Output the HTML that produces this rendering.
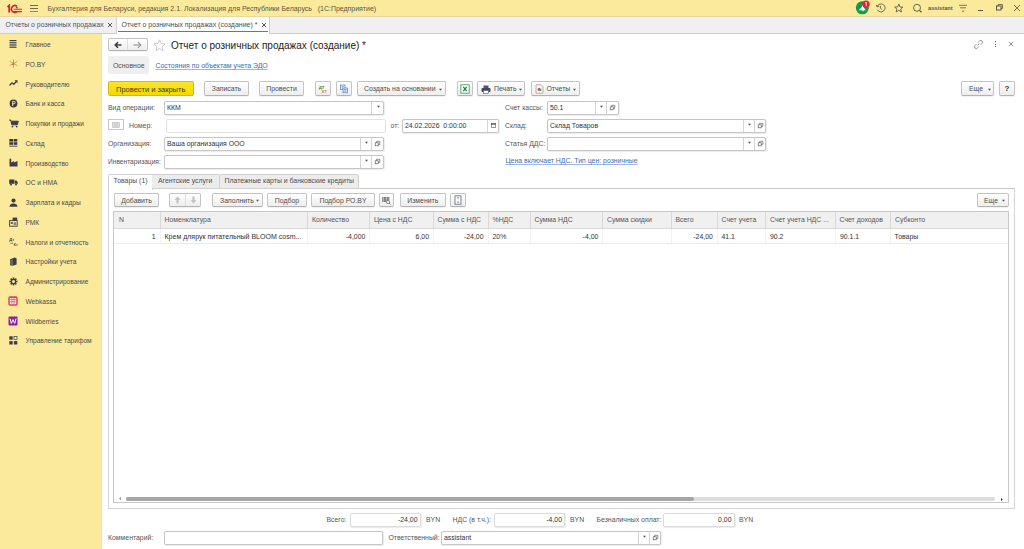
<!DOCTYPE html>
<html><head><meta charset="utf-8">
<style>
*{box-sizing:border-box;margin:0;padding:0}
html,body{width:1024px;height:549px;overflow:hidden;background:#fff;font-family:"Liberation Sans",sans-serif;color:#4d4d4d;font-size:6.9px}
.a{position:absolute;white-space:nowrap}
#top{position:absolute;left:0;top:0;width:1024px;height:17px;background:#fbea9c;border-bottom:1px solid #e6d6a0}
#tabs{position:absolute;left:0;top:17px;width:1024px;height:17px;background:#f0f0f0;border-bottom:1px solid #cdcdcd}
#side{position:absolute;left:0;top:34px;width:102px;height:515px;background:#fbea9c;border-right:1px solid #efe4b8}
.si{position:absolute;left:25.5px;font-size:6.6px;color:#4a4a4a;line-height:9.5px}
.ic{position:absolute}
.btn{position:absolute;height:14px;border:1px solid #c4c4c4;border-bottom-color:#b2b2b2;border-radius:2px;background:linear-gradient(#ffffff,#ededed);text-align:center;line-height:13.5px;color:#4d4d4d;white-space:nowrap;box-shadow:0 1px 1px rgba(0,0,0,.06)}
.fld{position:absolute;height:13px;border:1px solid #c6c6c6;border-radius:2px;background:#fff;line-height:11.5px;padding-left:2px;color:#333;white-space:nowrap;box-shadow:0.5px 0.5px 1px rgba(0,0,0,.08)}
.lbl{position:absolute;line-height:8px;white-space:nowrap;color:#555}
.sep{position:absolute;top:0;bottom:0;width:1px;background:#d6d6d6}
.dd{position:absolute;top:4px;width:0;height:0;border-left:2px solid transparent;border-right:2px solid transparent;border-top:2px solid #555}
.fdd{position:absolute;width:0;height:0;border-left:1.6px solid transparent;border-right:1.6px solid transparent;border-top:2px solid #555}
.th{position:absolute;top:0;height:17px;line-height:17px;padding-left:5px;color:#666;border-right:1px solid #dcdcdc;white-space:nowrap;overflow:hidden}
.td{position:absolute;line-height:15px;white-space:nowrap;color:#333}
</style></head><body>

<!-- TOP BAR -->
<div id="top"></div>
<div id="tabs"></div>
<div id="side"></div>

<!-- top bar content -->
<svg class="ic" style="left:6px;top:3.5px" width="18" height="10" viewBox="0 0 18 10">
 <path d="M1.5 3.2 L3.2 1.5 L3.2 8.6" stroke="#e41d2a" stroke-width="1.8" fill="none"/>
 <path d="M11 2.3 A3.4 3.4 0 1 0 11 7.6" stroke="#e41d2a" stroke-width="1.6" fill="none"/>
 <path d="M8.2 5.3 L16 5.3 M7.5 7.6 L16 7.6" stroke="#e41d2a" stroke-width="1.1" fill="none"/>
 <circle cx="10.8" cy="3.6" r="0.9" fill="#e41d2a"/>
</svg>
<div class="ic" style="left:30px;top:5px;width:7.5px;height:1px;background:#6e6a55"></div>
<div class="ic" style="left:30px;top:8px;width:7.5px;height:1px;background:#6e6a55"></div>
<div class="ic" style="left:30px;top:10.5px;width:7.5px;height:1px;background:#8d8a70"></div>
<div class="a" style="left:47.5px;top:5px;font-size:6.97px;line-height:8px;color:#5a5545">Бухгалтерия для Беларуси, редакция 2.1. Локализация для Республики Беларусь&nbsp;&nbsp;&nbsp;(1С:Предприятие)</div>

<svg class="ic" style="left:855px;top:0px" width="16" height="16" viewBox="0 0 16 16">
 <circle cx="7.3" cy="7.8" r="6.5" fill="#119a48"/>
 <path d="M3.6 10.2 L10.8 10.2 L8.6 7.2 L7.6 4.6 L6.6 7.2 Z" fill="#fff"/>
 <path d="M6.5 10.2 L8 11.8 L9 10.2 Z" fill="#e8e0f0"/>
 <circle cx="11" cy="4.1" r="3.7" fill="#e8212e"/>
 <path d="M10 3 L11.3 2.2 L11.3 6.2" stroke="#fde" stroke-width="1" fill="none"/>
</svg>
<svg class="ic" style="left:875px;top:2px" width="12" height="12" viewBox="0 0 12 12">
 <path d="M2.3 4.5 A4 4 0 1 1 2.4 7.6" stroke="#5b5646" stroke-width="0.85" fill="none"/>
 <path d="M1.3 3 L2.2 4.9 L4.2 4.3" stroke="#5b5646" stroke-width="0.85" fill="none"/>
 <path d="M5.4 3.8 L5.4 6.2 L7.2 7.6" stroke="#5b5646" stroke-width="0.85" fill="none"/>
</svg>
<svg class="ic" style="left:893px;top:2px" width="12" height="12" viewBox="0 0 12 12">
 <path d="M5.8 2 L7 5 L10 5.1 L7.7 7 L8.5 10 L5.8 8.3 L3.1 10 L3.9 7 L1.6 5.1 L4.6 5 Z" stroke="#5b5646" stroke-width="0.85" fill="none" stroke-linejoin="round"/>
</svg>
<svg class="ic" style="left:911px;top:2px" width="12" height="12" viewBox="0 0 12 12">
 <circle cx="6" cy="5.8" r="3.5" stroke="#5b5646" stroke-width="0.9" fill="none"/>
 <path d="M8.5 8.4 L10.5 10.3" stroke="#5b5646" stroke-width="1.3"/>
</svg>
<div class="a" style="left:928px;top:3.6px;font-size:5.7px;font-weight:bold;line-height:8px;color:#5b5646">assistant</div>
<svg class="ic" style="left:957px;top:2px" width="12" height="12" viewBox="0 0 12 12">
 <path d="M2 3.3 L10 3.3 M3 5.8 L9 5.8" stroke="#5b5646" stroke-width="0.8"/>
 <path d="M4.8 8.8 L7.2 8.8 L6 10.2 Z" fill="#5b5646"/>
</svg>
<div class="ic" style="left:978px;top:10px;width:5px;height:1px;background:#5b5646"></div>
<svg class="ic" style="left:995px;top:3px" width="9" height="9" viewBox="0 0 9 9">
 <rect x="1.5" y="3" width="4.5" height="4" stroke="#5b5646" stroke-width="1" fill="none"/>
 <path d="M3 3 L3 1.6 L7.4 1.6 L7.4 5.5 L6 5.5" stroke="#5b5646" stroke-width="0.9" fill="none"/>
</svg>
<svg class="ic" style="left:1013px;top:4px" width="8" height="8" viewBox="0 0 8 8">
 <path d="M1 1 L7 7 M7 1 L1 7" stroke="#5b5646" stroke-width="0.8"/>
</svg>


<!-- sidebar -->
<div class="si" style="top:40.0px">Главное</div>
<svg class="ic" style="left:9px;top:39.5px" width="8" height="8" viewBox="0 0 8 8"><rect x="0.5" y="0" width="7" height="1.2" fill="#3d3d4a"/><rect x="0.5" y="2.2" width="7" height="1.2" fill="#3d3d4a"/><rect x="0.5" y="4.4" width="7" height="1.2" fill="#3d3d4a"/><rect x="0.5" y="6.6" width="7" height="1.2" fill="#3d3d4a"/></svg>
<div class="si" style="top:59.8px">РО.BY</div>
<svg class="ic" style="left:9px;top:59.2px" width="9" height="9" viewBox="0 0 9 9"><path d="M4.5 0.5 L4.5 8.5 M0.8 2.5 L8.2 6.5 M0.8 6.5 L8.2 2.5" stroke="#b08a60" stroke-width="0.8"/><circle cx="4" cy="5.2" r="0.8" fill="#e33"/></svg>
<div class="si" style="top:79.5px">Руководителю</div>
<svg class="ic" style="left:9px;top:79.0px" width="9" height="8" viewBox="0 0 9 8"><path d="M0.5 6.5 L3 3.8 L4.8 5.3 L7.5 2.3" stroke="#3d3d4a" stroke-width="1.3" fill="none"/><path d="M5.5 1.2 L8.5 1.2 L8.5 4.2 Z" fill="#3d3d4a"/></svg>
<div class="si" style="top:99.2px">Банк и касса</div>
<svg class="ic" style="left:9px;top:98.8px" width="9" height="9" viewBox="0 0 9 9"><circle cx="4.5" cy="4.5" r="3.9" fill="#3d3d4a"/><path d="M3.6 7 L3.6 2.4 L5 2.4 A1.2 1.2 0 0 1 5 4.8 L3 4.8" stroke="#fbea9c" stroke-width="0.9" fill="none"/></svg>
<div class="si" style="top:119.0px">Покупки и продажи</div>
<svg class="ic" style="left:9px;top:118.5px" width="10" height="9" viewBox="0 0 10 9"><path d="M0.3 1 L1.8 1 L2.8 5.8 L8.3 5.8 L9.3 2.2 L2.2 2.2" stroke="#3d3d4a" stroke-width="1" fill="#3d3d4a"/><circle cx="3.4" cy="7.6" r="0.9" fill="#3d3d4a"/><circle cx="7.6" cy="7.6" r="0.9" fill="#3d3d4a"/></svg>
<div class="si" style="top:138.8px">Склад</div>
<svg class="ic" style="left:9px;top:138.7px" width="9" height="9" viewBox="0 0 9 9"><rect x="0.3" y="0" width="3.7" height="2.6" fill="#3d3d4a"/><rect x="4.6" y="0" width="3.7" height="2.6" fill="#3d3d4a"/><rect x="0.3" y="3.2" width="3.7" height="2.6" fill="#3d3d4a"/><rect x="4.6" y="3.2" width="3.7" height="2.6" fill="#3d3d4a"/><rect x="0.3" y="6.6" width="8" height="1.2" fill="#6d6a60"/></svg>
<div class="si" style="top:158.5px">Производство</div>
<svg class="ic" style="left:9px;top:158.0px" width="9" height="9" viewBox="0 0 9 9"><path d="M0.5 8.5 L0.5 0.8 L2.2 0.8 L2.2 4.5 L4.8 3 L4.8 4.5 L8.5 3 L8.5 8.5 Z" fill="#3d3d4a"/></svg>
<div class="si" style="top:178.2px">ОС и НМА</div>
<svg class="ic" style="left:9px;top:178.5px" width="9" height="7" viewBox="0 0 9 7"><rect x="0.2" y="0.5" width="5.2" height="4.3" fill="#3d3d4a"/><path d="M5.8 1.6 L7.4 1.6 L8.8 3.3 L8.8 4.8 L5.8 4.8 Z" fill="#3d3d4a"/><circle cx="2" cy="5.6" r="1" fill="#3d3d4a"/><circle cx="7" cy="5.6" r="1" fill="#3d3d4a"/></svg>
<div class="si" style="top:198.0px">Зарплата и кадры</div>
<svg class="ic" style="left:9px;top:197.5px" width="9" height="9" viewBox="0 0 9 9"><circle cx="4.5" cy="2.6" r="2.1" fill="#3d3d4a"/><path d="M0.5 8.7 Q0.8 5.4 4.5 5.4 Q8.2 5.4 8.5 8.7 Z" fill="#3d3d4a"/></svg>
<div class="si" style="top:217.8px">РМК</div>
<svg class="ic" style="left:9px;top:217.2px" width="9" height="10" viewBox="0 0 9 10"><rect x="0.6" y="3.6" width="7.6" height="5.6" stroke="#3d3d4a" stroke-width="0.9" fill="none"/><rect x="3.6" y="0.6" width="4.6" height="3" fill="#3d3d4a"/><rect x="1.8" y="5.2" width="2" height="1.6" fill="#3d3d4a"/><rect x="4.6" y="5.2" width="2.6" height="3" fill="#8a8470"/></svg>
<div class="si" style="top:237.5px">Налоги и отчетность</div>
<svg class="ic" style="left:8.5px;top:236.5px" width="10" height="10" viewBox="0 0 10 10"><text x="0.3" y="4.2" font-size="4" font-weight="bold" font-family="Liberation Sans" fill="#3d3d4a">Дт</text><text x="4.8" y="9" font-size="3.6" font-weight="bold" font-family="Liberation Sans" fill="#3d3d4a">Кт</text><path d="M1.5 6.3 L3.8 6.3" stroke="#3d3d4a" stroke-width="0.7"/></svg>
<div class="si" style="top:257.2px">Настройки учета</div>
<svg class="ic" style="left:9px;top:256.8px" width="9" height="9" viewBox="0 0 9 9"><path d="M1.2 2.2 L5.8 0.6 L7.6 1.4 L7.6 7.6 L3 9 L1.2 8.2 Z" fill="#3d3d4a"/><path d="M3 2.6 L3 9" stroke="#fbea9c" stroke-width="0.5"/></svg>
<div class="si" style="top:277.0px">Администрирование</div>
<svg class="ic" style="left:9px;top:276.5px" width="9" height="9" viewBox="0 0 9 9"><path d="M8.52 3.69 L8.52 5.31 L7.08 5.30 L6.89 5.76 L7.92 6.77 L6.77 7.92 L5.76 6.89 L5.30 7.08 L5.31 8.52 L3.69 8.52 L3.70 7.08 L3.24 6.89 L2.23 7.92 L1.08 6.77 L2.11 5.76 L1.92 5.30 L0.48 5.31 L0.48 3.69 L1.92 3.70 L2.11 3.24 L1.08 2.23 L2.23 1.08 L3.24 2.11 L3.70 1.92 L3.69 0.48 L5.31 0.48 L5.30 1.92 L5.76 2.11 L6.77 1.08 L7.92 2.23 L6.89 3.24 L7.08 3.70 Z" fill="#3d3d4a"/><circle cx="4.5" cy="4.5" r="1.5" fill="#fbea9c"/></svg>
<div class="si" style="top:296.8px">Webkassa</div>
<svg class="ic" style="left:8px;top:295.7px" width="10" height="10" viewBox="0 0 10 10"><rect x="0.3" y="0.3" width="9.4" height="9.4" rx="1.8" fill="#e5424a"/><rect x="1.8" y="2" width="6.4" height="6.2" fill="#fff"/><path d="M1.8 3.6 L8.2 3.6 M3.9 2 L3.9 8.2 M6 2 L6 8.2 M1.8 5.8 L8.2 5.8" stroke="#e5424a" stroke-width="0.7"/></svg>
<div class="si" style="top:316.5px">Wildberries</div>
<svg class="ic" style="left:8px;top:316.0px" width="10" height="10" viewBox="0 0 10 10"><rect x="0.5" y="0.5" width="9" height="9" rx="1" fill="#8a1fa0"/><path d="M2 2.6 L3.3 7.4 L5 3.6 L6.7 7.4 L8 2.6" stroke="#fff" stroke-width="1" fill="none"/></svg>
<div class="si" style="top:336.2px">Управление тарифом</div>
<svg class="ic" style="left:9px;top:335.8px" width="9" height="9" viewBox="0 0 9 9"><rect x="0.3" y="0.3" width="3.4" height="3.4" fill="#3d3d4a"/><rect x="5" y="0.5" width="3" height="3" stroke="#3d3d4a" stroke-width="0.7" fill="none"/><rect x="0.3" y="5.1" width="3.4" height="3.4" fill="#3d3d4a"/><rect x="4.9" y="5.1" width="3.4" height="3.4" fill="#3d3d4a"/></svg>


<!-- FORM HEADER -->
<div class="btn" style="left:108px;top:38px;width:40px;height:13px"></div>
<div class="ic" style="left:126.5px;top:39px;width:1px;height:11px;background:#dcdcdc"></div>
<svg class="ic" style="left:114px;top:40.5px" width="8" height="8" viewBox="0 0 8 8"><path d="M1.5 4 L7.5 4" stroke="#333" stroke-width="1.4"/><path d="M4 1.2 L1.2 4 L4 6.8" stroke="#333" stroke-width="1.5" fill="none"/></svg>
<svg class="ic" style="left:132.5px;top:40.5px" width="9" height="8" viewBox="0 0 9 8"><path d="M0.5 4 L7.5 4" stroke="#999" stroke-width="1.2"/><path d="M5 1.2 L7.8 4 L5 6.8" stroke="#999" stroke-width="1.2" fill="none"/></svg>
<svg class="ic" style="left:153px;top:38.5px" width="13" height="13" viewBox="0 0 13 13"><path d="M6.5 0.8 L8.2 4.6 L12.2 4.9 L9.1 7.6 L10.1 11.8 L6.5 9.6 L2.9 11.8 L3.9 7.6 L0.8 4.9 L4.8 4.6 Z" stroke="#c4c4c4" stroke-width="0.9" fill="none" stroke-linejoin="round"/></svg>
<div class="a" style="left:171px;top:39.5px;font-size:10px;line-height:12px;color:#222">Отчет о розничных продажах (создание) *</div>
<svg class="ic" style="left:973px;top:39px" width="11" height="11" viewBox="0 0 11 11"><path d="M4.6 6.4 L6.4 4.6" stroke="#888" stroke-width="0.9"/><path d="M5.2 3.4 L6.6 2 A1.6 1.6 0 0 1 9 4.4 L7.6 5.8" stroke="#888" stroke-width="0.9" fill="none"/><path d="M5.8 7.6 L4.4 9 A1.6 1.6 0 0 1 2 6.6 L3.4 5.2" stroke="#888" stroke-width="0.9" fill="none"/></svg>
<div class="ic" style="left:994.5px;top:41px;width:1.2px;height:1.2px;background:#666"></div>
<div class="ic" style="left:994.5px;top:43.5px;width:1.2px;height:1.2px;background:#666"></div>
<div class="ic" style="left:994.5px;top:46px;width:1.2px;height:1.2px;background:#666"></div>
<svg class="ic" style="left:1008px;top:40.8px" width="6" height="6" viewBox="0 0 6 6"><path d="M0.8 0.8 L5.2 5.2 M5.2 0.8 L0.8 5.2" stroke="#777" stroke-width="0.8"/></svg>

<div class="ic" style="left:108px;top:56px;width:41px;height:18px;background:#efefef;border-radius:2px"></div>
<div class="a" style="left:113px;top:62.2px;line-height:8px;color:#4d4d4d">Основное</div>
<div class="a" style="left:155.5px;top:62.2px;line-height:8px;color:#3d6cb8;text-decoration:underline;text-decoration-color:#9fb8e0">Состояния по объектам учета ЭДО</div>

<!-- TOOLBAR -->
<div class="ic" style="left:108px;top:81px;width:86px;height:15px;background:linear-gradient(#fde52a,#f5d800);border:1px solid #d6bb00;border-radius:2px"></div>
<div class="a" style="left:116px;top:85.5px;font-size:7.5px;line-height:8px;color:#3a3a2a">Провести и закрыть</div>
<div class="btn" style="left:204px;top:81px;height:15px;line-height:14.5px;width:45px">Записать</div>
<div class="btn" style="left:259px;top:81px;height:15px;line-height:14.5px;width:45px">Провести</div>
<div class="btn" style="left:315px;top:81px;height:15px;line-height:14.5px;width:16px"></div>
<svg class="ic" style="left:318px;top:84px" width="10" height="10" viewBox="0 0 10 10"><text x="0.8" y="4.6" font-size="4.2" font-weight="bold" font-family="Liberation Sans" fill="#2a8a3a">ДТ</text><text x="4" y="8.8" font-size="3.8" font-weight="bold" font-family="Liberation Sans" fill="#ef6a3a">КТ</text></svg>
<div class="btn" style="left:336px;top:81px;height:15px;line-height:14.5px;width:16px"></div>
<svg class="ic" style="left:339px;top:84px" width="10" height="10" viewBox="0 0 10 10"><rect x="1.5" y="1" width="4.5" height="4.5" stroke="#4a78b8" stroke-width="0.7" fill="#fff"/><rect x="4" y="4" width="4.5" height="4.8" stroke="#4a78b8" stroke-width="0.7" fill="#e4eef9"/><path d="M2.5 2.5 L5 2.5 M2.5 3.8 L4 3.8 M5 5.5 L7.5 5.5 M5 7 L7.5 7" stroke="#4a78b8" stroke-width="0.6"/></svg>
<div class="btn" style="left:357px;top:81px;height:15px;line-height:14.5px;width:89px;text-align:left;padding-left:6px">Создать на основании</div>
<svg class="ic" style="left:438.0px;top:88.0px" width="5" height="4" viewBox="0 0 5 4"><path d="M1 0.8 L4 0.8 L2.5 2.7 Z" fill="#555"/></svg>
<div class="btn" style="left:457px;top:81px;height:15px;line-height:14.5px;width:16px"></div>
<svg class="ic" style="left:460px;top:83.5px" width="10" height="10" viewBox="0 0 10 10"><rect x="0.8" y="0.8" width="8.4" height="8.4" stroke="#3aa75a" stroke-width="0.9" fill="#fff"/><path d="M3.3 2.8 L6.7 7.2 M6.7 2.8 L3.3 7.2" stroke="#17803a" stroke-width="1.2"/></svg>
<div class="btn" style="left:477px;top:81px;height:15px;line-height:14.5px;width:48px;text-align:left;padding-left:16px">Печать</div>
<svg class="ic" style="left:481px;top:84.5px" width="10" height="9" viewBox="0 0 10 9"><rect x="2.5" y="0.5" width="5" height="2.5" fill="#556" /><rect x="0.5" y="3" width="9" height="4" rx="1" fill="#3f4a6a"/><rect x="2.5" y="5.5" width="5" height="3" fill="#fff" stroke="#556" stroke-width="0.6"/></svg>
<svg class="ic" style="left:518.0px;top:88.0px" width="5" height="4" viewBox="0 0 5 4"><path d="M1 0.8 L4 0.8 L2.5 2.7 Z" fill="#555"/></svg>
<div class="btn" style="left:530.5px;top:81px;height:15px;line-height:14.5px;width:49px;text-align:left;padding-left:15px">Отчеты</div>
<svg class="ic" style="left:535px;top:83.5px" width="9" height="10" viewBox="0 0 9 10"><path d="M1 0.8 L6 0.8 L8 2.8 L8 9.2 L1 9.2 Z" stroke="#9a9a9a" stroke-width="0.7" fill="#f6f6f6"/><circle cx="4" cy="5.5" r="1.4" fill="#e0463c"/><rect x="5" y="4.6" width="1.3" height="2.4" fill="#4aa05a"/></svg>
<svg class="ic" style="left:572.0px;top:88.0px" width="5" height="4" viewBox="0 0 5 4"><path d="M1 0.8 L4 0.8 L2.5 2.7 Z" fill="#555"/></svg>
<div class="btn" style="left:961px;top:81px;height:15px;line-height:14.5px;width:33px;text-align:left;padding-left:7px">Еще</div>
<svg class="ic" style="left:986.5px;top:88.0px" width="5" height="4" viewBox="0 0 5 4"><path d="M1 0.8 L4 0.8 L2.5 2.7 Z" fill="#555"/></svg>
<div class="btn" style="left:999px;top:81px;height:15px;line-height:14.5px;width:16px;font-weight:bold;font-size:8px;color:#333">?</div>


<!-- FIELDS -->
<div class="lbl" style="left:108px;top:103.5px">Вид операции:</div>
<div class="fld" style="left:164px;top:101px;width:220px;height:13.5px">ККМ</div>
<div class="ic" style="left:371.0px;top:102px;width:1px;height:11.5px;background:#d4d4d4"></div>
<svg class="ic" style="left:375.7px;top:104.8px" width="5" height="4" viewBox="0 0 5 4"><path d="M1 0.8 L4 0.8 L2.5 2.7 Z" fill="#555"/></svg>
<div class="ic" style="left:108px;top:119px;width:16px;height:11px;border:1px solid #c8c8c8;background:#fff"></div>
<svg class="ic" style="left:112px;top:121.5px" width="8" height="6" viewBox="0 0 8 6"><rect x="0.5" y="0.5" width="7" height="5" fill="#ddd" stroke="#bbb" stroke-width="0.6"/><path d="M3 0.5 L3 5.5 M5 0.5 L5 5.5" stroke="#bbb" stroke-width="0.6"/></svg>
<div class="lbl" style="left:129px;top:121.5px">Номер:</div>
<div class="fld" style="left:166px;top:119px;width:220px;height:13.5px;border-color:#e2e2e2;box-shadow:none"></div>
<div class="lbl" style="left:390.5px;top:121.5px">от:</div>
<div class="fld" style="left:402px;top:119px;width:97px;height:13.5px">24.02.2026&nbsp; 0:00:00</div>
<div class="ic" style="left:487.0px;top:120px;width:1px;height:11.5px;background:#d4d4d4"></div>
<svg class="ic" style="left:489.8px;top:122px" width="7" height="7" viewBox="0 0 7 7"><rect x="1.3" y="1.5" width="4.4" height="4" stroke="#555" stroke-width="0.6" fill="#fff"/><rect x="1.3" y="1.5" width="4.4" height="1.2" fill="#555"/></svg>
<div class="lbl" style="left:108px;top:139.5px">Организация:</div>
<div class="fld" style="left:164px;top:137px;width:220px;height:13.5px">Ваша организация ООО</div>
<div class="ic" style="left:360.0px;top:138px;width:1px;height:11.5px;background:#d4d4d4"></div>
<svg class="ic" style="left:364.0px;top:140.8px" width="5" height="4" viewBox="0 0 5 4"><path d="M1 0.8 L4 0.8 L2.5 2.7 Z" fill="#555"/></svg>
<div class="ic" style="left:371.0px;top:138px;width:1px;height:11.5px;background:#d4d4d4"></div>
<svg class="ic" style="left:374.2px;top:140.0px" width="7" height="7" viewBox="0 0 7 7"><rect x="1.2" y="2.8" width="3" height="3" stroke="#555" stroke-width="0.65" fill="#fff"/><path d="M2.6 2.8 L2.6 1.3 L5.8 1.3 L5.8 4.4 L4.2 4.4" stroke="#555" stroke-width="0.65" fill="none"/></svg>
<div class="lbl" style="left:108px;top:157.5px;font-size:6.62px">Инвентаризация:</div>
<div class="fld" style="left:164px;top:155px;width:220px;height:13.5px"></div>
<div class="ic" style="left:360.0px;top:156px;width:1px;height:11.5px;background:#d4d4d4"></div>
<svg class="ic" style="left:364.0px;top:158.8px" width="5" height="4" viewBox="0 0 5 4"><path d="M1 0.8 L4 0.8 L2.5 2.7 Z" fill="#555"/></svg>
<div class="ic" style="left:371.0px;top:156px;width:1px;height:11.5px;background:#d4d4d4"></div>
<svg class="ic" style="left:374.2px;top:158.0px" width="7" height="7" viewBox="0 0 7 7"><rect x="1.2" y="2.8" width="3" height="3" stroke="#555" stroke-width="0.65" fill="#fff"/><path d="M2.6 2.8 L2.6 1.3 L5.8 1.3 L5.8 4.4 L4.2 4.4" stroke="#555" stroke-width="0.65" fill="none"/></svg>
<div class="lbl" style="left:505px;top:103.5px">Счет кассы:</div>
<div class="fld" style="left:547px;top:101px;width:71.5px;height:13.5px">50.1</div>
<div class="ic" style="left:595.1px;top:102px;width:1px;height:11.5px;background:#d4d4d4"></div>
<svg class="ic" style="left:599.0px;top:104.8px" width="5" height="4" viewBox="0 0 5 4"><path d="M1 0.8 L4 0.8 L2.5 2.7 Z" fill="#555"/></svg>
<div class="ic" style="left:605.9px;top:102px;width:1px;height:11.5px;background:#d4d4d4"></div>
<svg class="ic" style="left:609.0px;top:104.0px" width="7" height="7" viewBox="0 0 7 7"><rect x="1.2" y="2.8" width="3" height="3" stroke="#555" stroke-width="0.65" fill="#fff"/><path d="M2.6 2.8 L2.6 1.3 L5.8 1.3 L5.8 4.4 L4.2 4.4" stroke="#555" stroke-width="0.65" fill="none"/></svg>
<div class="lbl" style="left:505px;top:121.5px">Склад:</div>
<div class="fld" style="left:547px;top:119px;width:219px;height:13.5px">Склад Товаров</div>
<div class="ic" style="left:743.0px;top:120px;width:1px;height:11.5px;background:#d4d4d4"></div>
<svg class="ic" style="left:747.0px;top:122.8px" width="5" height="4" viewBox="0 0 5 4"><path d="M1 0.8 L4 0.8 L2.5 2.7 Z" fill="#555"/></svg>
<div class="ic" style="left:754.0px;top:120px;width:1px;height:11.5px;background:#d4d4d4"></div>
<svg class="ic" style="left:756.8px;top:122.0px" width="7" height="7" viewBox="0 0 7 7"><rect x="1.2" y="2.8" width="3" height="3" stroke="#555" stroke-width="0.65" fill="#fff"/><path d="M2.6 2.8 L2.6 1.3 L5.8 1.3 L5.8 4.4 L4.2 4.4" stroke="#555" stroke-width="0.65" fill="none"/></svg>
<div class="lbl" style="left:505px;top:139.5px">Статья ДДС:</div>
<div class="fld" style="left:547px;top:137px;width:219px;height:13.5px"></div>
<div class="ic" style="left:743.0px;top:138px;width:1px;height:11.5px;background:#d4d4d4"></div>
<svg class="ic" style="left:747.0px;top:140.8px" width="5" height="4" viewBox="0 0 5 4"><path d="M1 0.8 L4 0.8 L2.5 2.7 Z" fill="#555"/></svg>
<div class="ic" style="left:754.0px;top:138px;width:1px;height:11.5px;background:#d4d4d4"></div>
<svg class="ic" style="left:756.8px;top:140.0px" width="7" height="7" viewBox="0 0 7 7"><rect x="1.2" y="2.8" width="3" height="3" stroke="#555" stroke-width="0.65" fill="#fff"/><path d="M2.6 2.8 L2.6 1.3 L5.8 1.3 L5.8 4.4 L4.2 4.4" stroke="#555" stroke-width="0.65" fill="none"/></svg>
<div class="a" style="left:505.5px;top:157px;line-height:8px;color:#3d6cb8;text-decoration:underline;text-decoration-color:#9fb8e0">Цена включает НДС. Тип цен: розничные</div>

<!-- TAB PANEL -->
<div class="ic" style="left:108px;top:188px;width:907px;height:321px;border:1px solid #d4d4d4;border-top-color:#c8c8c8;background:#fff"></div>
<div class="ic" style="left:108px;top:173.5px;width:44.5px;height:16px;border:1px solid #d0d0d0;border-bottom:none;background:#fff;border-radius:2px 2px 0 0"></div>
<div class="a" style="left:113.5px;top:177px;line-height:8px;color:#4d4d4d">Товары (1)</div>
<div class="ic" style="left:152px;top:173.5px;width:67.5px;height:15px;border:1px solid #d0d0d0;border-left:none;background:#ececec;border-radius:0 2px 0 0"></div>
<div class="a" style="left:158px;top:177px;line-height:8px;color:#4d4d4d">Агентские услуги</div>
<div class="ic" style="left:219px;top:173.5px;width:140px;height:15px;border:1px solid #d0d0d0;background:#ececec;border-radius:2px 2px 0 0"></div>
<div class="a" style="left:224.5px;top:177px;line-height:8px;color:#4d4d4d">Платежные карты и банковские кредиты</div>

<!-- TABLE TOOLBAR -->
<div class="btn" style="left:114px;top:193px;width:45px;height:14px">Добавить</div>
<div class="btn" style="left:169px;top:193px;width:32px;height:14px"></div>
<div class="ic" style="left:185px;top:194px;width:1px;height:12px;background:#dedede"></div>
<svg class="ic" style="left:173.5px;top:196px" width="7" height="8" viewBox="0 0 7 8"><path d="M3.5 0.5 L6.5 3.8 L4.6 3.8 L4.6 7.5 L2.4 7.5 L2.4 3.8 L0.5 3.8 Z" fill="#c2c2c2"/></svg>
<svg class="ic" style="left:189.5px;top:196px" width="7" height="8" viewBox="0 0 7 8"><path d="M3.5 7.5 L6.5 4.2 L4.6 4.2 L4.6 0.5 L2.4 0.5 L2.4 4.2 L0.5 4.2 Z" fill="#c2c2c2"/></svg>
<div class="btn" style="left:212px;top:193px;width:51px;height:14px;text-align:left;padding-left:7px">Заполнить</div>
<svg class="ic" style="left:255.0px;top:199.0px" width="5" height="4" viewBox="0 0 5 4"><path d="M1 0.8 L4 0.8 L2.5 2.7 Z" fill="#555"/></svg>
<div class="btn" style="left:267px;top:193px;width:40px;height:14px">Подбор</div>
<div class="btn" style="left:311px;top:193px;width:64px;height:14px">Подбор РО.BY</div>
<div class="btn" style="left:379px;top:193px;width:15px;height:14px"></div>
<svg class="ic" style="left:382px;top:195.5px" width="9" height="9" viewBox="0 0 9 9"><path d="M0.8 1 L0.8 6 M2.3 1 L2.3 6 M3.8 1 L3.8 6 M5.3 1 L5.3 6 M6.8 1 L6.8 4" stroke="#555" stroke-width="0.9"/><circle cx="6" cy="6" r="1.6" stroke="#555" stroke-width="0.7" fill="#fff"/><path d="M7.2 7.2 L8.4 8.4" stroke="#555" stroke-width="0.8"/></svg>
<div class="btn" style="left:400px;top:193px;width:45.5px;height:14px">Изменить</div>
<div class="btn" style="left:450px;top:193px;width:16px;height:14px"></div>
<svg class="ic" style="left:453px;top:195px" width="10" height="10" viewBox="0 0 10 10"><rect x="2" y="0.8" width="6" height="8.4" stroke="#5a6288" stroke-width="0.8" fill="#fff"/><path d="M4 2.4 L6 2.4 L5 3.8 Z M4 7.6 L6 7.6 L5 6.2 Z" fill="#333"/></svg>
<div class="btn" style="left:977px;top:193px;width:32px;height:14px;text-align:left;padding-left:6px">Еще</div>
<svg class="ic" style="left:1001.0px;top:199.0px" width="5" height="4" viewBox="0 0 5 4"><path d="M1 0.8 L4 0.8 L2.5 2.7 Z" fill="#555"/></svg>

<!-- TABLE -->
<div class="ic" style="left:113px;top:211px;width:896px;height:292px;border:1px solid #c8c8c8;background:#fff"></div>
<div class="ic" style="left:114px;top:212px;width:894px;height:16.5px;background:#f0f0f0;border-bottom:1px solid #dadada"></div>
<div class="a" style="left:119.0px;top:215.5px;line-height:8px;color:#555">N</div>
<div class="ic" style="left:159.5px;top:212px;width:1px;height:16px;background:#d8d8d8"></div>
<div class="ic" style="left:159.5px;top:229px;width:1px;height:14px;background:#f3f3f3"></div>
<div class="a" style="left:164.5px;top:215.5px;line-height:8px;color:#555">Номенклатура</div>
<div class="ic" style="left:307.0px;top:212px;width:1px;height:16px;background:#d8d8d8"></div>
<div class="ic" style="left:307.0px;top:229px;width:1px;height:14px;background:#f3f3f3"></div>
<div class="a" style="left:312.0px;top:215.5px;line-height:8px;color:#555">Количество</div>
<div class="ic" style="left:369.0px;top:212px;width:1px;height:16px;background:#d8d8d8"></div>
<div class="ic" style="left:369.0px;top:229px;width:1px;height:14px;background:#f3f3f3"></div>
<div class="a" style="left:374.0px;top:215.5px;line-height:8px;color:#555">Цена с НДС</div>
<div class="ic" style="left:432.5px;top:212px;width:1px;height:16px;background:#d8d8d8"></div>
<div class="ic" style="left:432.5px;top:229px;width:1px;height:14px;background:#f3f3f3"></div>
<div class="a" style="left:437.5px;top:215.5px;line-height:8px;color:#555">Сумма с НДС</div>
<div class="ic" style="left:487.5px;top:212px;width:1px;height:16px;background:#d8d8d8"></div>
<div class="ic" style="left:487.5px;top:229px;width:1px;height:14px;background:#f3f3f3"></div>
<div class="a" style="left:492.5px;top:215.5px;line-height:8px;color:#555">%НДС</div>
<div class="ic" style="left:529.5px;top:212px;width:1px;height:16px;background:#d8d8d8"></div>
<div class="ic" style="left:529.5px;top:229px;width:1px;height:14px;background:#f3f3f3"></div>
<div class="a" style="left:534.5px;top:215.5px;line-height:8px;color:#555">Сумма НДС</div>
<div class="ic" style="left:602.0px;top:212px;width:1px;height:16px;background:#d8d8d8"></div>
<div class="ic" style="left:602.0px;top:229px;width:1px;height:14px;background:#f3f3f3"></div>
<div class="a" style="left:607.0px;top:215.5px;line-height:8px;color:#555">Сумма скидки</div>
<div class="ic" style="left:670.5px;top:212px;width:1px;height:16px;background:#d8d8d8"></div>
<div class="ic" style="left:670.5px;top:229px;width:1px;height:14px;background:#f3f3f3"></div>
<div class="a" style="left:675.5px;top:215.5px;line-height:8px;color:#555">Всего</div>
<div class="ic" style="left:716.5px;top:212px;width:1px;height:16px;background:#d8d8d8"></div>
<div class="ic" style="left:716.5px;top:229px;width:1px;height:14px;background:#f3f3f3"></div>
<div class="a" style="left:721.5px;top:215.5px;line-height:8px;color:#555">Счет учета</div>
<div class="ic" style="left:765.0px;top:212px;width:1px;height:16px;background:#d8d8d8"></div>
<div class="ic" style="left:765.0px;top:229px;width:1px;height:14px;background:#f3f3f3"></div>
<div class="a" style="left:770.0px;top:215.5px;line-height:8px;color:#555">Счет учета НДС ...</div>
<div class="ic" style="left:834.5px;top:212px;width:1px;height:16px;background:#d8d8d8"></div>
<div class="ic" style="left:834.5px;top:229px;width:1px;height:14px;background:#f3f3f3"></div>
<div class="a" style="left:839.5px;top:215.5px;line-height:8px;color:#555">Счет доходов</div>
<div class="ic" style="left:890.0px;top:212px;width:1px;height:16px;background:#d8d8d8"></div>
<div class="ic" style="left:890.0px;top:229px;width:1px;height:14px;background:#f3f3f3"></div>
<div class="a" style="left:895.0px;top:215.5px;line-height:8px;color:#555">Субконто</div>
<div class="ic" style="left:114px;top:243px;width:894px;height:1px;background:#ececec"></div>
<div class="a" style="right:868.5px;top:232.5px;line-height:8px;color:#333">1</div>
<div class="a" style="left:164.5px;top:232.5px;line-height:8px;color:#333;font-size:7.02px">Крем длярук питательный BLOOM cosm...</div>
<div class="a" style="right:658.7px;top:232.5px;line-height:8px;color:#333">-4,000</div>
<div class="a" style="right:595.0px;top:232.5px;line-height:8px;color:#333">6,00</div>
<div class="a" style="right:540.5px;top:232.5px;line-height:8px;color:#333">-24,00</div>
<div class="a" style="left:492.5px;top:232.5px;line-height:8px;color:#333">20%</div>
<div class="a" style="right:425.7px;top:232.5px;line-height:8px;color:#333">-4,00</div>
<div class="a" style="right:311.2px;top:232.5px;line-height:8px;color:#333">-24,00</div>
<div class="a" style="left:721.5px;top:232.5px;line-height:8px;color:#333">41.1</div>
<div class="a" style="left:770.0px;top:232.5px;line-height:8px;color:#333">90.2</div>
<div class="a" style="left:840.0px;top:232.5px;line-height:8px;color:#333">90.1.1</div>
<div class="a" style="left:894.5px;top:232.5px;line-height:8px;color:#333">Товары</div>
<div class="ic" style="left:126px;top:496.5px;width:869px;height:4.5px;background:#dcdcdc;border-radius:2px"></div>
<div class="ic" style="left:126px;top:496.5px;width:568px;height:4.5px;background:#a6a6a6;border-radius:2px"></div>
<svg class="ic" style="left:118px;top:496px" width="4" height="5" viewBox="0 0 4 5"><path d="M3 0.8 L1 2.5 L3 4.2 Z" fill="#999"/></svg>
<svg class="ic" style="left:1000px;top:496.5px" width="4" height="5" viewBox="0 0 4 5"><path d="M1 1 L2.8 2.5 L1 4 Z" fill="#333"/></svg>


<!-- TOTALS -->
<div class="lbl" style="left:326.5px;top:515.5px">Всего:</div>
<div class="fld" style="left:350px;top:513px;width:70.5px;height:13.5px;text-align:right;padding-right:2px;border-color:#dcdcdc;line-height:12px">-24,00</div>
<div class="lbl" style="left:426px;top:515.5px">BYN</div>
<div class="lbl" style="left:452.5px;top:515.5px">НДС (в т.ч.):</div>
<div class="fld" style="left:494px;top:513px;width:71px;height:13.5px;text-align:right;padding-right:2px;border-color:#dcdcdc;line-height:12px">-4,00</div>
<div class="lbl" style="left:570px;top:515.5px">BYN</div>
<div class="lbl" style="left:596.5px;top:515.5px">Безналичных оплат:</div>
<div class="fld" style="left:663px;top:513px;width:71.5px;height:13.5px;text-align:right;padding-right:2px;border-color:#dcdcdc;line-height:12px">0,00</div>
<div class="lbl" style="left:739px;top:515.5px">BYN</div>

<div class="lbl" style="left:108px;top:534px">Комментарий:</div>
<div class="fld" style="left:164px;top:531px;width:219px;height:13.5px"></div>
<div class="lbl" style="left:388.5px;top:534px">Ответственный:</div>
<div class="fld" style="left:441px;top:531px;width:220px;height:13.5px">assistant</div>
<div class="ic" style="left:637.5px;top:532px;width:1px;height:11.5px;background:#d4d4d4"></div>
<svg class="ic" style="left:641.6px;top:534.8px" width="5" height="4" viewBox="0 0 5 4"><path d="M1 0.8 L4 0.8 L2.5 2.7 Z" fill="#555"/></svg>
<div class="ic" style="left:648.7px;top:532px;width:1px;height:11.5px;background:#d4d4d4"></div>
<svg class="ic" style="left:651.6px;top:534.0px" width="7" height="7" viewBox="0 0 7 7"><rect x="1.2" y="2.8" width="3" height="3" stroke="#555" stroke-width="0.65" fill="#fff"/><path d="M2.6 2.8 L2.6 1.3 L5.8 1.3 L5.8 4.4 L4.2 4.4" stroke="#555" stroke-width="0.65" fill="none"/></svg>

<!-- tabs -->
<div class="a" style="left:5.5px;top:21px;font-size:6.87px;line-height:8px;color:#4d5566">Отчеты о розничных продажах</div>
<svg class="ic" style="left:107px;top:21.5px" width="6" height="6" viewBox="0 0 6 6"><path d="M1 1 L5 5 M5 1 L1 5" stroke="#444" stroke-width="0.9"/></svg>
<div class="ic" style="left:116px;top:17px;width:1px;height:16px;background:#d0d0d0"></div>
<div class="ic" style="left:117px;top:17px;width:152px;height:17px;background:#fff"></div>
<div class="ic" style="left:118px;top:30.5px;width:150px;height:1px;background:#2fa04e"></div>
<div class="a" style="left:121.5px;top:21px;font-size:6.98px;line-height:8px;color:#4d4d4d">Отчет о розничных продажах (создание) *</div>
<svg class="ic" style="left:261px;top:21.5px" width="6" height="6" viewBox="0 0 6 6"><path d="M1 1 L5 5 M5 1 L1 5" stroke="#444" stroke-width="0.9"/></svg>
<div class="ic" style="left:269px;top:17px;width:1px;height:16px;background:#d0d0d0"></div>


</body></html>
